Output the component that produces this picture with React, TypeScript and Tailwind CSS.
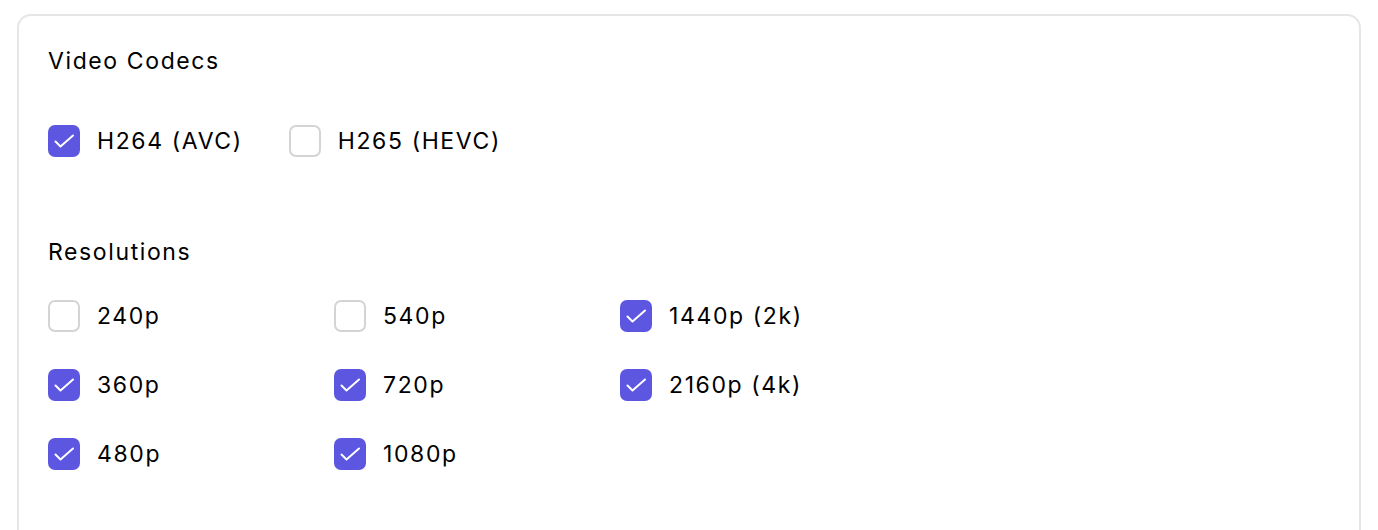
const codecs = [
  { label: 'H264 (AVC)', checked: true },
  { label: 'H265 (HEVC)', checked: false },
];

const resolutions = [
  { label: '240p', checked: false },
  { label: '540p', checked: false },
  { label: '1440p (2k)', checked: true },
  { label: '360p', checked: true },
  { label: '720p', checked: true },
  { label: '2160p (4k)', checked: true },
  { label: '480p', checked: true },
  { label: '1080p', checked: true },
];

function Box({ checked }: { checked: boolean }) {
  if (!checked) {
    return <span className="w-8 h-8 shrink-0 rounded-[7px] border-2 border-[#d4d4d4] bg-white" />;
  }
  return (
    <span className="w-8 h-8 shrink-0 rounded-[7px] bg-[#5d56e0]">
      <svg width="32" height="32" viewBox="0 0 32 32" fill="none">
        <path d="M7.5 16.5l5 5L25 10.5" stroke="white" strokeWidth="2" strokeLinecap="round" strokeLinejoin="round" />
      </svg>
    </span>
  );
}

function Check({ label, checked }: { label: string; checked: boolean }) {
  return (
    <label className="flex items-center gap-[17px]">
      <Box checked={checked} />
      <span className="text-[23px] leading-8 tracking-[0.07em] text-black">{label}</span>
    </label>
  );
}

export default function App() {
  return (
    <div className="bg-white h-[530px] pt-[14px] px-[17px] overflow-hidden" style={{ fontFamily: 'Inter, sans-serif' }}>
      <div className="border-2 border-[#e6e6e6] rounded-[14px] pt-[29px] px-[29px] pb-10 h-[600px]">
        <h3 className="text-[23px] leading-8 tracking-[0.07em] text-black">Video Codecs</h3>
        <div className="flex gap-[46px] mt-12">
          {codecs.map((c) => (
            <Check key={c.label} {...c} />
          ))}
        </div>
        <h3 className="text-[23px] leading-8 tracking-[0.07em] text-black mt-[79px]">Resolutions</h3>
        <div className="grid grid-cols-[286px_286px_286px] gap-y-[37px] mt-8">
          {resolutions.map((r) => (
            <Check key={r.label} {...r} />
          ))}
        </div>
      </div>
    </div>
  );
}
